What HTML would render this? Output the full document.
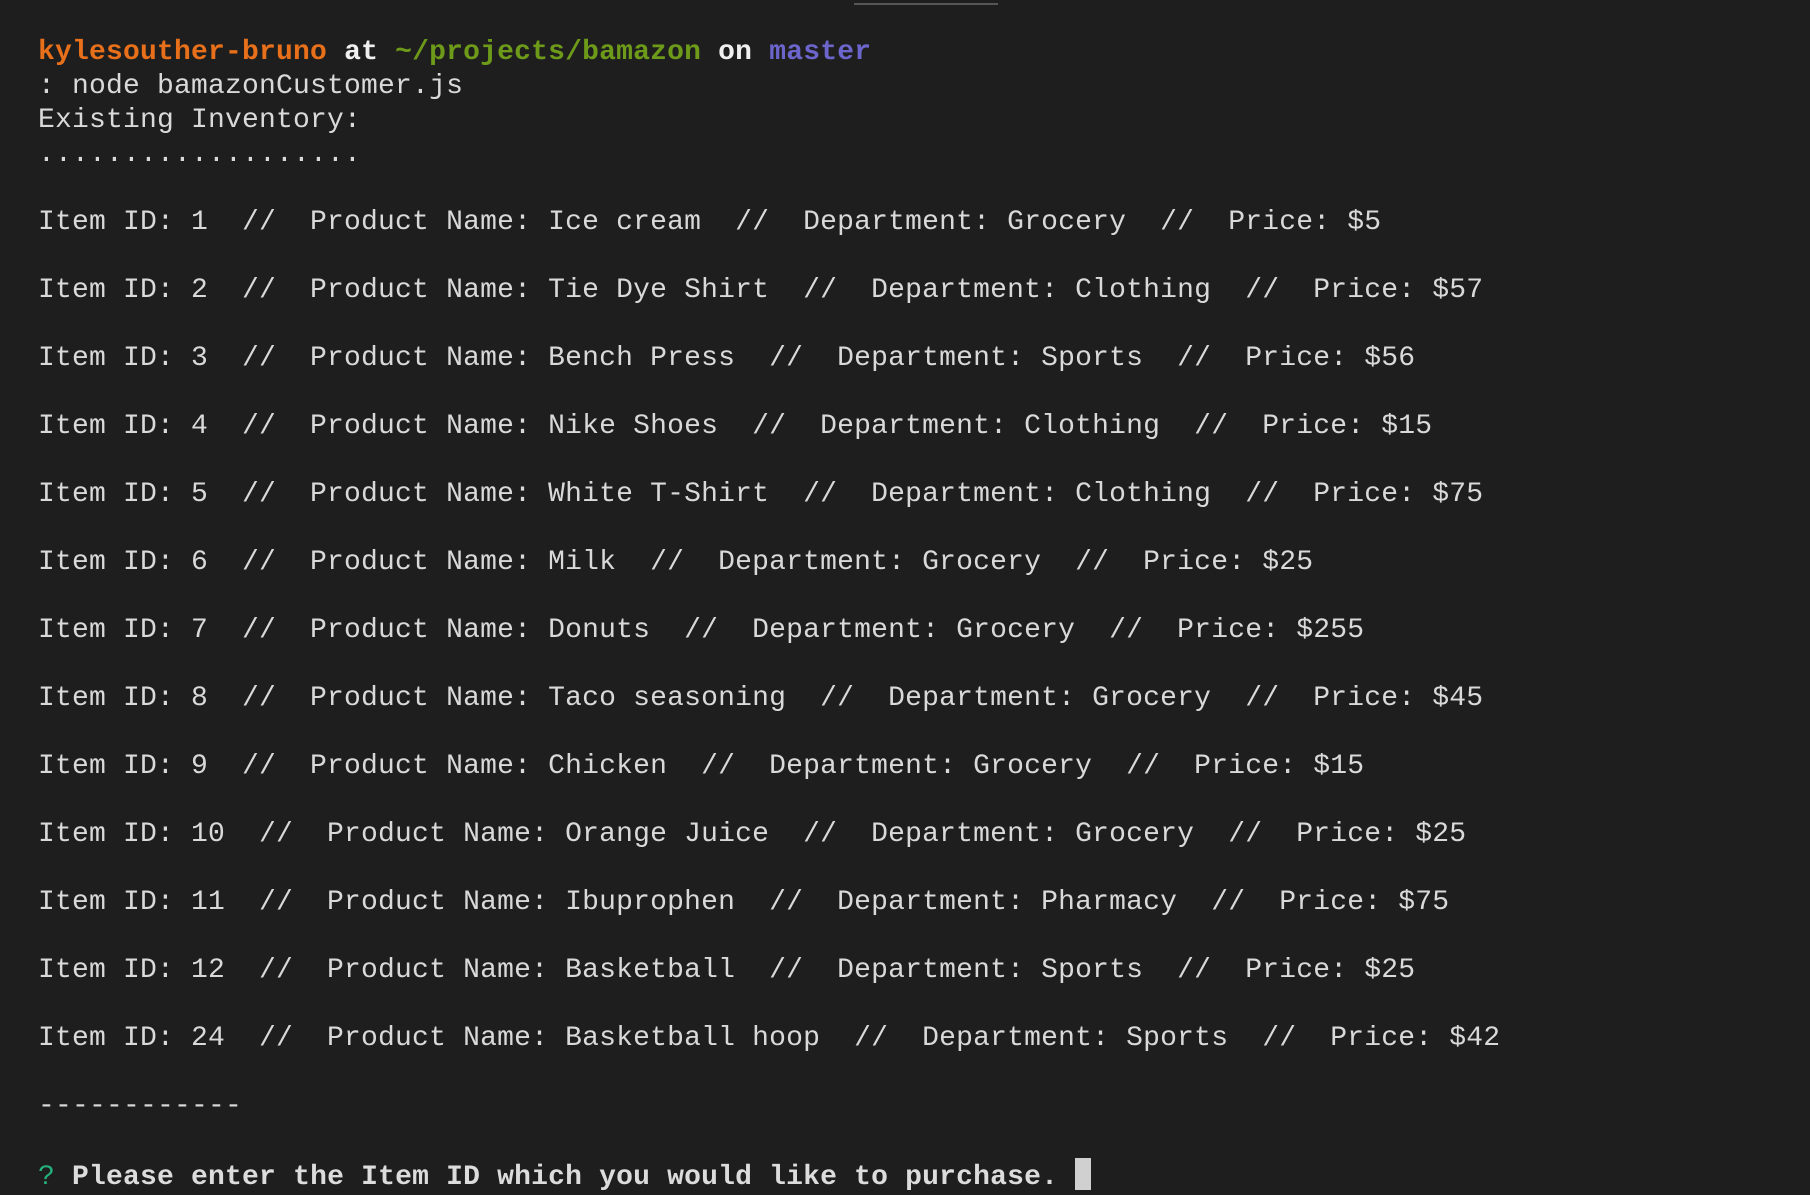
<!DOCTYPE html>
<html><head><style>
html,body{margin:0;padding:0;background:#1e1e1e;width:1810px;height:1194px;overflow:hidden}
pre{margin:0;position:absolute;left:38px;top:36px;font-family:"Liberation Mono",monospace;font-size:28px;line-height:34px;color:#d9d9d9;letter-spacing:0.2px}
.o{color:#e8701a;font-weight:bold}.w{color:#f0f0f0;font-weight:bold}.g{color:#6e9a1a;font-weight:bold}.p{color:#6c66cc;font-weight:bold}
.q{color:#23b07a}.b{font-weight:bold;color:#dcdcdc}
.cur{display:inline-block;width:16px;height:32px;background:#d0d0d0;vertical-align:-6px}
.bar{position:absolute;left:854px;top:3px;width:144px;height:2px;background:#555}
</style></head><body>
<div class="bar"></div>
<pre><span class="o">kylesouther-bruno</span> <span class="w">at</span> <span class="g">~/projects/bamazon</span> <span class="w">on</span> <span class="p">master</span>
: node bamazonCustomer.js
Existing Inventory:
...................

Item ID: 1  //  Product Name: Ice cream  //  Department: Grocery  //  Price: $5

Item ID: 2  //  Product Name: Tie Dye Shirt  //  Department: Clothing  //  Price: $57

Item ID: 3  //  Product Name: Bench Press  //  Department: Sports  //  Price: $56

Item ID: 4  //  Product Name: Nike Shoes  //  Department: Clothing  //  Price: $15

Item ID: 5  //  Product Name: White T-Shirt  //  Department: Clothing  //  Price: $75

Item ID: 6  //  Product Name: Milk  //  Department: Grocery  //  Price: $25

Item ID: 7  //  Product Name: Donuts  //  Department: Grocery  //  Price: $255

Item ID: 8  //  Product Name: Taco seasoning  //  Department: Grocery  //  Price: $45

Item ID: 9  //  Product Name: Chicken  //  Department: Grocery  //  Price: $15

Item ID: 10  //  Product Name: Orange Juice  //  Department: Grocery  //  Price: $25

Item ID: 11  //  Product Name: Ibuprophen  //  Department: Pharmacy  //  Price: $75

Item ID: 12  //  Product Name: Basketball  //  Department: Sports  //  Price: $25

Item ID: 24  //  Product Name: Basketball hoop  //  Department: Sports  //  Price: $42

------------

<span class="q">?</span> <span class="b">Please enter the Item ID which you would like to purchase.</span> <span class="cur"></span></pre>
</body></html>
